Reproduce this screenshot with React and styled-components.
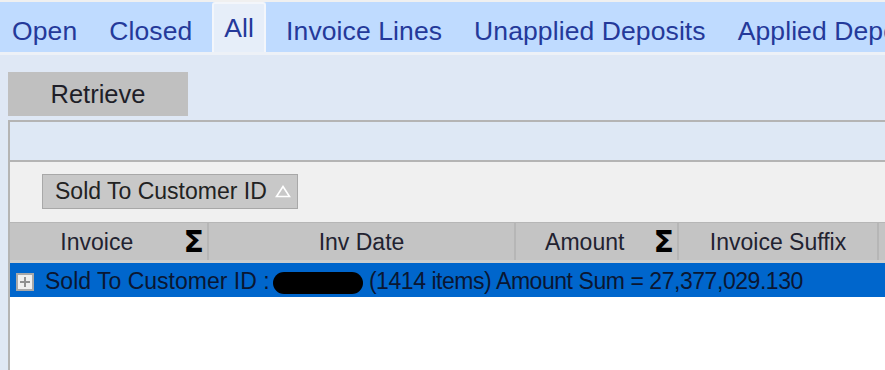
import React from 'react';
import styled, { createGlobalStyle, css } from 'styled-components';

const Global = createGlobalStyle`
  html, body { margin: 0; padding: 0; }
  body {
    background: #dfe8f5;
    font-family: "Liberation Sans", Arial, sans-serif;
    overflow: hidden;
  }
`;

const Page = styled.div`
  width: 885px;
  height: 370px;
  overflow: hidden;
  display: flex;
  flex-direction: column;
  background: #dfe8f5;
`;

const TabBar = styled.div`
  flex: none;
  height: 50px;
  display: flex;
  gap: 8px;
  background: #bfdbff;
  border-top: 2px solid #f0f0f0;
  border-bottom: 3px solid #edf1f7;
  white-space: nowrap;
  overflow: hidden;
`;

const Tab = styled.div`
  flex: none;
  display: flex;
  align-items: center;
  padding: 8px 12px 0;
  font-size: 26.5px;
  letter-spacing: 0.1px;
  color: #24399a;
  ${(p) =>
    p.$active &&
    css`
      padding: 0 10px 3px;
      background: #e6eef9;
      border: 2px solid #f3f6fb;
      border-bottom: none;
      margin-bottom: -3px;
      border-radius: 3px 3px 0 0;
    `}
`;

const Content = styled.div`
  flex: 1;
  display: flex;
  flex-direction: column;
  padding: 17px 0 0 8px;
  min-height: 0;
`;

const Button = styled.button`
  flex: none;
  width: 180px;
  height: 44px;
  margin: 0 0 4px;
  padding: 0;
  border: none;
  background: #c0c0c0;
  font-family: inherit;
  font-size: 25.5px;
  color: #1e1e28;
`;

const Panel = styled.div`
  flex: 1;
  width: 1000px;
  display: flex;
  flex-direction: column;
  border-left: 2px solid #b4b4b4;
  border-top: 2px solid #b4b4b4;
  background: #fff;
`;

const Caption = styled.div`
  flex: none;
  height: 38px;
  background: #dee8f5;
  border-bottom: 2px solid #b4b4b4;
`;

const GroupArea = styled.div`
  flex: none;
  height: 60px;
  box-sizing: border-box;
  padding: 12px 0 0 32px;
  background: #f0f0f0;
`;

const GroupChip = styled.div`
  box-sizing: border-box;
  width: 256px;
  height: 35px;
  display: flex;
  align-items: center;
  justify-content: space-between;
  padding: 0 6px 0 12px;
  border: 1px solid #a8a8a8;
  background: #c8c8c8;
  font-size: 23px;
  color: #222;
  white-space: nowrap;
`;

const HeaderRow = styled.div`
  flex: none;
  height: 41px;
  box-sizing: border-box;
  display: flex;
  background: #c4c4c4;
  border-top: 1px solid #b6b6b6;
  border-bottom: 3px solid #cdcdcd;
`;

const HeaderCell = styled.div`
  flex: none;
  width: ${(p) => p.$w}px;
  box-sizing: border-box;
  display: flex;
  align-items: center;
  border-right: 2px solid #b6b6b6;
  padding-right: ${(p) => (p.$sum ? 3 : 0)}px;
  font-size: 23px;
  color: #222230;
  white-space: nowrap;
`;

const HeaderLabel = styled.span`
  flex: 1;
  text-align: center;
  padding-top: 1px;
`;

const Sigma = styled.span`
  flex: none;
  font-family: "DejaVu Sans", sans-serif;
  font-weight: bold;
  font-size: 30px;
  line-height: 1;
  color: #000;
`;

const GroupRow = styled.div`
  flex: none;
  height: 34px;
  box-sizing: border-box;
  display: flex;
  align-items: center;
  gap: 11px;
  padding: 3px 0 0 6px;
  background: #0066cc;
  font-size: 23px;
  color: #0a1632;
  white-space: nowrap;
`;

const Expander = styled.svg`
  flex: none;
  width: 18px;
  height: 18px;
`;

const Redacted = styled.span`
  display: inline-block;
  width: 90px;
  height: 22px;
  border-radius: 11px;
  background: #000;
  vertical-align: -5px;
  margin-left: -3px;
`;

const Summary = styled.span`
  letter-spacing: -0.45px;
`;

const Rows = styled.div`
  flex: 1;
  background: #fff;
`;

const tabs = ['Open', 'Closed', 'All', 'Invoice Lines', 'Unapplied Deposits', 'Applied Deposits'];

const columns = [
  { label: 'Invoice', w: 199, sum: true },
  { label: 'Inv Date', w: 307 },
  { label: 'Amount', w: 163, sum: true },
  { label: 'Invoice Suffix', w: 200 },
  { label: '', w: 200 },
];

export default function App() {
  return (
    <Page>
      <Global />
      <TabBar>
        {tabs.map((t) => (
          <Tab key={t} $active={t === 'All'}>
            {t}
          </Tab>
        ))}
      </TabBar>
      <Content>
        <Button>Retrieve</Button>
        <Panel>
          <Caption />
          <GroupArea>
            <GroupChip>
              <span>Sold To Customer ID</span>
              <svg width="16" height="13" viewBox="0 0 16 13">
                <polygon points="8,1.5 14.5,11.5 1.5,11.5" fill="none" stroke="#fff" strokeWidth="1.6" />
              </svg>
            </GroupChip>
          </GroupArea>
          <HeaderRow>
            {columns.map((c, i) => (
              <HeaderCell key={i} $w={c.w} $sum={c.sum}>
                <HeaderLabel>{c.label}</HeaderLabel>
                {c.sum && <Sigma>Σ</Sigma>}
              </HeaderCell>
            ))}
          </HeaderRow>
          <GroupRow>
            <Expander viewBox="0 0 18 18">
              <rect x="1" y="1" width="16" height="16" fill="#efefef" stroke="#a8a8a8" strokeWidth="2" />
              <rect x="4" y="8" width="10" height="2" fill="#909090" />
              <rect x="8" y="4" width="2" height="10" fill="#909090" />
            </Expander>
            <span>
              Sold To Customer ID : <Redacted />
              <Summary> (1414 items) Amount Sum = 27,377,029.130</Summary>
            </span>
          </GroupRow>
          <Rows />
        </Panel>
      </Content>
    </Page>
  );
}
